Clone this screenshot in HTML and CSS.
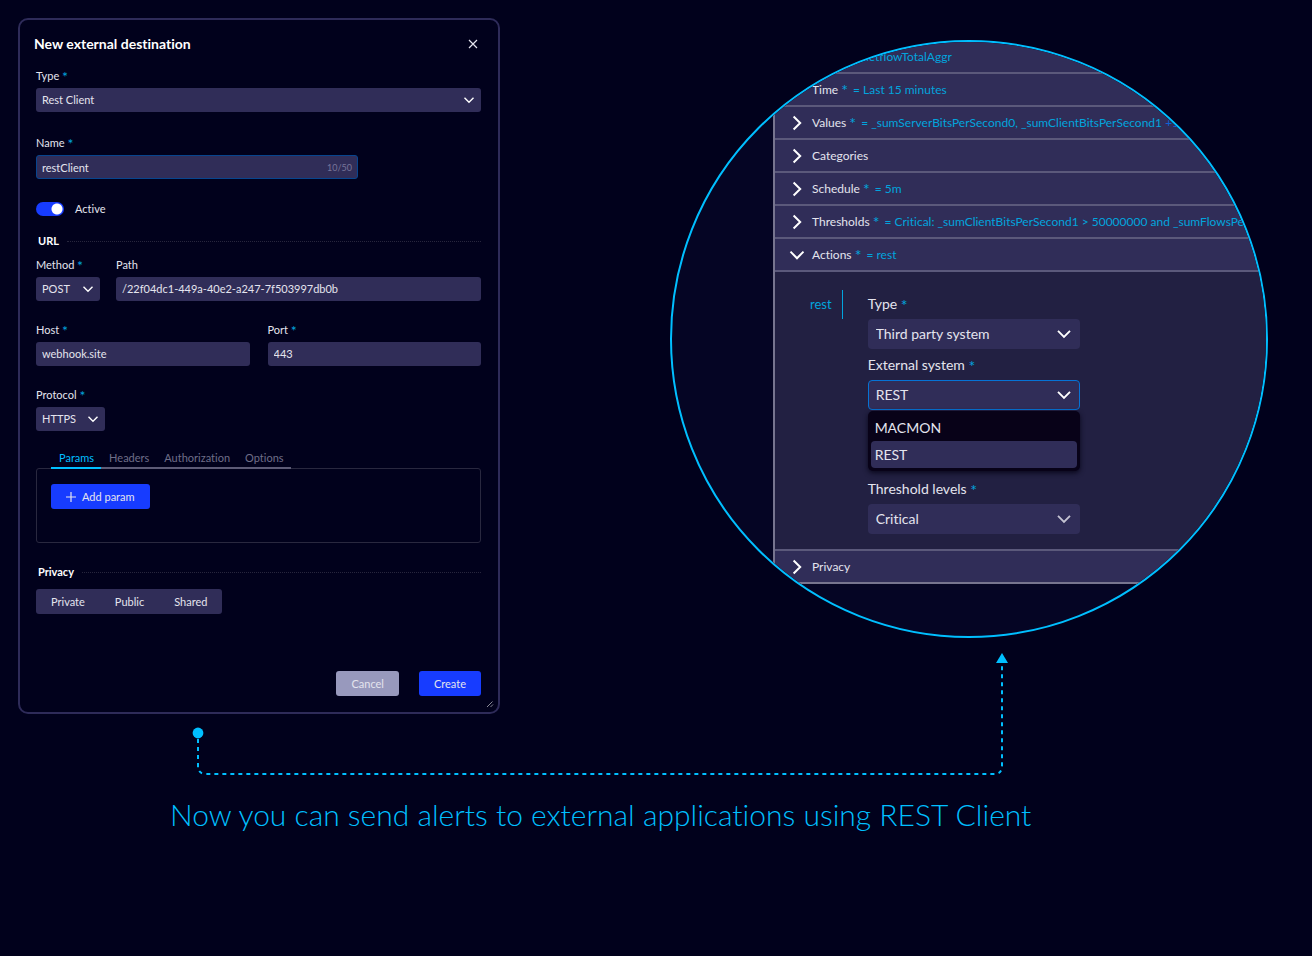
FILE: index.html
```html
<!DOCTYPE html>
<html lang="en">
<head>
<meta charset="utf-8">
<meta name="viewport" content="width=device-width, initial-scale=1">
<title>REST Client alerts</title>
<link rel="stylesheet" href="styles.css">
</head>
<body>
<svg class="sprite" aria-hidden="true">
  <symbol id="chevron-down" viewBox="0 0 12 12"><path d="M1.5 3.7 6 8.2 10.5 3.7" fill="none" stroke="currentColor" stroke-width="1.4"/></symbol>
  <symbol id="row-right" viewBox="0 0 16 16"><path d="M4.6 1.5 11.2 8 4.6 14.5" fill="none" stroke="currentColor" stroke-width="2"/></symbol>
  <symbol id="row-down" viewBox="0 0 16 16"><path d="M1.5 4.6 8 11.2 14.5 4.6" fill="none" stroke="currentColor" stroke-width="2"/></symbol>
</svg>

<main>
  <div class="scene">
    <form class="panel">
      <header class="panel-head">
        <h1>New external destination</h1>
        <button type="button" class="close" aria-label="Close">
          <svg width="10" height="10" viewBox="0 0 10 10"><path d="M1 1 9 9M9 1 1 9" fill="none" stroke="currentColor" stroke-width="1.2"/></svg>
        </button>
      </header>

      <div class="panel-body">
        <div class="field">
          <label for="type">Type <i>*</i></label>
          <div class="select"><select id="type"><option>Rest Client</option></select><svg><use href="#chevron-down"/></svg></div>
        </div>

        <div class="field field-name">
          <label for="name">Name <i>*</i></label>
          <div class="counted"><input id="name" type="text" value="restClient"><span>10/50</span></div>
        </div>

        <label class="switch"><input type="checkbox" checked>Active</label>

        <h2>URL</h2>
        <div class="row row-method">
          <div class="field">
            <label for="method">Method <i>*</i></label>
            <div class="select"><select id="method"><option>POST</option></select><svg><use href="#chevron-down"/></svg></div>
          </div>
          <div class="field">
            <label for="path">Path</label>
            <input id="path" type="text" value="/22f04dc1-449a-40e2-a247-7f503997db0b">
          </div>
        </div>

        <div class="row row-host">
          <div class="field">
            <label for="host">Host <i>*</i></label>
            <input id="host" type="text" value="webhook.site">
          </div>
          <div class="field">
            <label for="port">Port <i>*</i></label>
            <input id="port" type="text" value="443">
          </div>
        </div>

        <div class="field field-protocol">
          <label for="protocol">Protocol <i>*</i></label>
          <div class="select"><select id="protocol"><option>HTTPS</option></select><svg><use href="#chevron-down"/></svg></div>
        </div>

        <div class="tabs" role="tablist">
          <button type="button" role="tab" aria-selected="true">Params</button>
          <button type="button" role="tab" aria-selected="false">Headers</button>
          <button type="button" role="tab" aria-selected="false">Authorization</button>
          <button type="button" role="tab" aria-selected="false">Options</button>
        </div>
        <div class="tab-box" role="tabpanel">
          <button type="button" class="btn primary">
            <svg width="10" height="10" viewBox="0 0 10 10"><path d="M5 0V10M0 5H10" fill="none" stroke="currentColor" stroke-width="1.2"/></svg>
            Add param
          </button>
        </div>

        <h2 class="h-privacy">Privacy</h2>
        <div class="segments">
          <button type="button">Private</button>
          <button type="button">Public</button>
          <button type="button">Shared</button>
        </div>

        <footer class="actions">
          <button type="button" class="btn muted">Cancel</button>
          <button type="submit" class="btn primary">Create</button>
        </footer>
      </div>
      <svg class="grip" width="8" height="8" viewBox="0 0 8 8"><path d="M1 7 6.5 1.5M4.5 7 7 4.5" fill="none" stroke="#8a8a96" stroke-width="1"/></svg>
    </form>

    <section class="lens" aria-label="Alert settings">
      <div class="accordion">
        <button type="button" class="item"><svg><use href="#row-right"/></svg>Data <i>*</i><em>= netflowTotalAggr</em></button>
        <button type="button" class="item"><svg><use href="#row-right"/></svg>Time <i>*</i><em>= Last 15 minutes</em></button>
        <button type="button" class="item"><svg><use href="#row-right"/></svg>Values <i>*</i><em>= _sumServerBitsPerSecond0, _sumClientBitsPerSecond1 <b>+11</b></em></button>
        <button type="button" class="item"><svg><use href="#row-right"/></svg>Categories</button>
        <button type="button" class="item"><svg><use href="#row-right"/></svg>Schedule <i>*</i><em>= 5m</em></button>
        <button type="button" class="item"><svg><use href="#row-right"/></svg>Thresholds <i>*</i><em>= Critical: _sumClientBitsPerSecond1 &gt; 50000000 and _sumFlowsPerSe</em></button>
        <button type="button" class="item" aria-expanded="true"><svg><use href="#row-down"/></svg>Actions <i>*</i><em>= rest</em></button>
        <div class="item-body">
          <a class="action-name" href="#rest">rest</a>
          <div class="action-fields">
            <label for="action-type">Type <i>*</i></label>
            <div class="select"><select id="action-type"><option>Third party system</option></select><svg><use href="#chevron-down"/></svg></div>
            <label for="system">External system <i>*</i></label>
            <div class="select open">
              <select id="system"><option>REST</option></select><svg><use href="#chevron-down"/></svg>
              <ul class="menu" role="listbox">
                <li role="option">MACMON</li>
                <li role="option" aria-selected="true">REST</li>
              </ul>
            </div>
            <label class="after-menu" for="levels">Threshold levels <i>*</i></label>
            <div class="select dim"><select id="levels"><option>Critical</option></select><svg><use href="#chevron-down"/></svg></div>
          </div>
        </div>
        <button type="button" class="item last"><svg><use href="#row-right"/></svg>Privacy</button>
      </div>
    </section>
  </div>

  <svg class="connector" viewBox="0 0 1312 130" aria-hidden="true">
    <circle cx="198" cy="83" r="5.4"/>
    <path class="dash" d="M198 89V116Q198 124 206 124H994Q1002 124 1002 116V12"/>
    <path d="M1002 3 1008 13H996Z"/>
  </svg>
  <p class="caption">Now you can send alerts to external applications using REST Client</p>
</main>
</body>
</html>
```
FILE: styles.css
```css
:root {
  --bg: #01011c;
  --control: #302d58;
  --line: #2e2b59;
  --text: #e4e4ee;
  --cyan: #00bfff;
  --accent: #02a4dd;
  --blue: #173cff;
}

* { box-sizing: border-box; }

body {
  margin: 0;
  min-height: 100vh;
  background: var(--bg);
  color: var(--text);
  font: 11px/16px Lato, "Open Sans", sans-serif;
  font-variant-ligatures: none;
}

button, input, select { margin: 0; font: inherit; font-variant-ligatures: none; color: inherit; }
button { border: 0; padding: 0; background: none; }
i { font-style: normal; font-size: 14px; line-height: 1px; vertical-align: -2px; color: var(--accent); }
.sprite { display: none; }

.scene {
  display: grid;
  grid-template-columns: minmax(0, 482fr) minmax(0, 598fr);
  column-gap: 170px;
  align-items: start;
  padding: 18px 44px 0 18px;
}

/* Destination form */
.panel {
  position: relative;
  padding: 0 17px 16px 16px;
  border: 2px solid var(--line);
  border-radius: 10px;
}
.panel-head {
  display: flex;
  align-items: center;
  justify-content: space-between;
  height: 48px;
  margin-left: -2px;
  padding-right: 3px;
}
h1 { margin: 0; font-size: 14px; font-weight: 700; color: #fff; }
.close { display: flex; }

.field { display: flex; flex-direction: column; gap: 4px; }
.select { position: relative; }
.select select { appearance: none; width: 100%; }
.select > svg {
  position: absolute;
  right: 6px;
  top: 6px;
  width: 12px;
  height: 12px;
  color: #fff;
  pointer-events: none;
}
.panel input[type="text"], .panel select {
  display: block;
  width: 100%;
  height: 24px;
  padding: 0 6px 1px;
  border: 0;
  border-radius: 3px;
  background: var(--control);
}
.field-name { width: 322px; max-width: 100%; margin-top: 23px; }
.counted { position: relative; }
.panel .counted input { border: 1px solid #07458f; padding: 0 5px; }
.counted span { position: absolute; right: 6px; top: 5px; color: #77759a; font-size: 9px; }

.switch { display: flex; align-items: center; gap: 11px; height: 16px; margin-top: 22px; }
.switch input {
  appearance: none;
  width: 28px;
  height: 14px;
  border-radius: 7px;
  background: radial-gradient(circle at 21px 7px, #fff 5px, transparent 6px) var(--blue);
}

h2 {
  display: flex;
  align-items: center;
  gap: 8px;
  margin: 16px 0 8px;
  padding-left: 2px;
  font-size: 11px;
  font-weight: 700;
  color: #fff;
}
h2::after { content: ""; flex: 1; border-top: 1px dotted #27263d; }

.row { display: grid; }
.row-method { grid-template-columns: 64px 1fr; gap: 16px; }
.row-host { grid-template-columns: 1fr 1fr; gap: 18px; margin-top: 21px; }
.field-protocol { width: 69px; margin-top: 21px; }

.tabs { display: flex; width: max-content; margin: 17px 0 -1px 15px; }
.tabs button {
  height: 21px;
  padding: 0 7px 0 8px;
  border-bottom: 2px solid #5d5b76;
  color: #6f6e88;
}
.tabs button[aria-selected="true"] { border-color: var(--cyan); color: var(--cyan); }
.tab-box {
  min-height: 75px;
  padding: 15px 14px;
  border: 1px solid #29283f;
  border-radius: 3px;
}

.btn {
  display: inline-flex;
  align-items: center;
  justify-content: center;
  gap: 6px;
  height: 25px;
  padding: 0 15px;
  border-radius: 3px;
}
.primary { background: var(--blue); }
.muted { background: #9899bd; }

.h-privacy { margin: 21px 0 9px; }
.segments { display: flex; width: max-content; border-radius: 3px; background: var(--control); }
.segments button { height: 25px; padding: 0 15px; }
.actions { display: flex; justify-content: flex-end; gap: 20px; margin-top: 57px; }
.grip { position: absolute; right: 4px; bottom: 4px; }

/* Magnified settings */
.lens {
  aspect-ratio: 1;
  margin-top: 22px;
  overflow: hidden;
  border: 2px solid var(--cyan);
  border-radius: 50%;
  background: #050524;
}
.accordion {
  margin: -1px 0 0 101px;
  border-left: 2px solid #77758f;
  font-size: 12px;
}
.accordion i { font-size: 16px; }
.item {
  display: flex;
  align-items: center;
  width: 100%;
  height: 33px;
  padding-left: 14px;
  border-bottom: 2px solid #5b597b;
  background: var(--control);
  white-space: pre;
}
.item svg { flex: none; width: 16px; height: 16px; margin-right: 7px; color: #fff; }
.item i { line-height: 12px; }
.item em { margin-left: 5px; font-style: normal; color: var(--accent); }
.item b { font-weight: 400; color: #0a63d6; }
.last { border-color: #77758f; }

.item-body {
  display: flex;
  align-items: flex-start;
  padding: 18px 0 15px 35px;
  border-bottom: 2px solid #5b597b;
  background: #222042;
  font-size: 14px;
}
.action-name {
  padding-right: 10px;
  border-right: 1px solid var(--accent);
  line-height: 29px;
  color: var(--accent);
  font-size: 13px;
  text-decoration: none;
}
.action-fields { width: 212px; margin: 5px 0 0 25px; }
.action-fields label { display: block; margin: 7px 0 6px; line-height: 18px; }
.action-fields label:first-child { margin-top: 0; }
.action-fields label.after-menu { margin-top: 70px; }
.action-fields select {
  display: block;
  height: 30px;
  padding: 0 8px;
  border: 0;
  border-radius: 4px;
  background: var(--control);
}
.action-fields .select > svg { width: 16px; height: 16px; right: 8px; top: 7px; }
.action-fields .dim > svg { color: #c4c3d2; }
.action-fields .open select { border: 1px solid #0673d6; padding: 0 7px; }
.menu {
  position: absolute;
  top: 31px;
  left: 0;
  right: 0;
  margin: 0;
  padding: 3px;
  border-radius: 5px;
  background: #080218;
  box-shadow: 0 2px 5px #0a081c;
  list-style: none;
}
.menu li { padding: 0 4px; border-radius: 4px; line-height: 27px; }
.menu li[aria-selected="true"] { background: var(--control); }

/* Link between the two views */
.connector { display: block; width: 100%; margin-top: -64px; fill: var(--cyan); pointer-events: none; }
.dash { fill: none; stroke: var(--cyan); stroke-width: 2; stroke-dasharray: 4 4; }
.caption {
  margin: 16px 0 0;
  padding-left: 170px;
  color: var(--cyan);
  font-size: 30px;
  font-weight: 300;
  line-height: 36px;
}
```
